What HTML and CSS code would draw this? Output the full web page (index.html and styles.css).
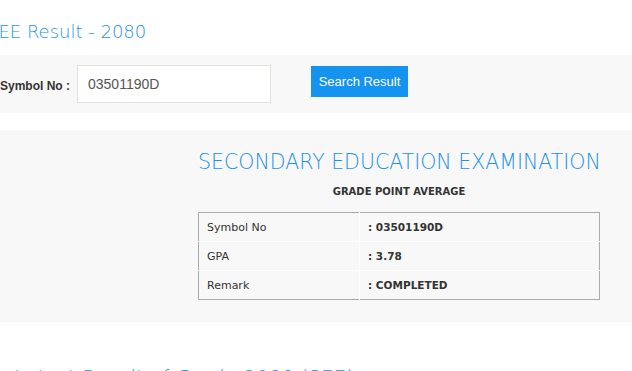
FILE: index.html
```html
<!DOCTYPE html>
<html lang="en">
<head>
  <meta charset="UTF-8" />
  <meta name="viewport" content="width=device-width, initial-scale=1.0"/>
  <title>SEE Result - 2080</title>
  <link rel="stylesheet" href="styles.css">
</head>
<body>
  <div class="page">
    <h2 class="page-title">SEE Result - 2080</h2>
    <form class="search-bar" onsubmit="return false;">
      <label class="search-label" for="symbol">Symbol No :</label>
      <input class="search-input" id="symbol" type="text" value="03501190D" />
      <button class="search-button" type="submit">Search Result</button>
    </form>
    <div class="result-panel">
      <div class="result-side"></div>
      <div class="result-main">
        <h1 class="result-heading">SECONDARY EDUCATION EXAMINATION</h1>
        <h4 class="result-sub">GRADE POINT AVERAGE</h4>
        <table class="result-table">
          <tr>
            <td class="cell-key">Symbol No</td>
            <td class="cell-value">: 03501190D</td>
          </tr>
          <tr>
            <td class="cell-key">GPA</td>
            <td class="cell-value">: 3.78</td>
          </tr>
          <tr>
            <td class="cell-key">Remark</td>
            <td class="cell-value">: COMPLETED</td>
          </tr>
        </table>
      </div>
    </div>
    <h2 class="next-title">Latest Result of Grade 2080 (SEE)</h2>
  </div>
</body>
</html>
```

FILE: styles.css
```css
body {
  margin: 0;
  background-color: #fff;
  font-family: 'Liberation Sans', Arial, sans-serif;
  overflow: hidden;
}
.page {
  width: 632px;
}
.page-title {
  margin: 0 0 0 -13px;
  padding-top: 19px;
  height: 36px;
  font-family: 'DejaVu Sans', sans-serif;
  font-weight: 200;
  font-size: 18px;
  line-height: 26px;
  color: #1e91ea;
}
.search-bar {
  display: flex;
  align-items: center;
  height: 58px;
  background-color: #f8f8f8;
  margin: 0;
}
.search-label {
  width: 77px;
  font-size: 12px;
  font-weight: bold;
  color: #333;
  margin-top: 3px;
}
.search-input {
  width: 194px;
  height: 38px;
  box-sizing: border-box;
  border: 1px solid #e3e2da;
  background-color: #fff;
  padding: 0 10px;
  font-family: 'Liberation Sans', Arial, sans-serif;
  font-size: 14px;
  color: #555;
  outline: none;
}
.search-button {
  align-self: flex-start;
  margin: 11px 0 0 40px;
  width: 97px;
  height: 31px;
  border: none;
  background-color: #1493ef;
  color: #fff;
  font-family: 'Liberation Sans', Arial, sans-serif;
  font-size: 13px;
  padding: 0;
  cursor: pointer;
}
.result-panel {
  margin-top: 17px;
  display: grid;
  grid-template-columns: 198px 402px;
  background-color: #f8f8f8;
  padding-bottom: 22px;
}
.result-main {
  text-align: center;
}
.result-heading {
  margin: 0;
  padding-top: 19px;
  font-family: 'DejaVu Sans', sans-serif;
  font-weight: 200;
  font-size: 20.5px;
  line-height: 26px;
  color: #1e91ea;
  white-space: nowrap;
}
.result-sub {
  margin: 9px 0 0;
  font-family: 'DejaVu Sans', sans-serif;
  font-size: 10px;
  font-weight: bold;
  line-height: 16px;
  color: #333;
}
.result-table {
  margin-top: 12px;
  width: 402px;
  border-collapse: collapse;
  border: 1px solid #aaa;
  text-align: left;
  font-family: 'DejaVu Sans', sans-serif;
  font-size: 11px;
  color: #333;
}
.result-table td {
  height: 28px;
  padding: 0 8px;
  border-top: 1px solid #fff;
}
.result-table tr:first-child td {
  border-top: none;
}
.cell-key {
  width: 144px;
  border-right: 1px solid #fff;
}
.cell-value {
  font-weight: bold;
  font-size: 10.5px;
}
.next-title {
  margin: 42px 0 0 14px;
  font-family: 'DejaVu Sans', sans-serif;
  font-weight: 200;
  font-size: 20px;
  line-height: 26px;
  color: #1e91ea;
  white-space: nowrap;
}
```
